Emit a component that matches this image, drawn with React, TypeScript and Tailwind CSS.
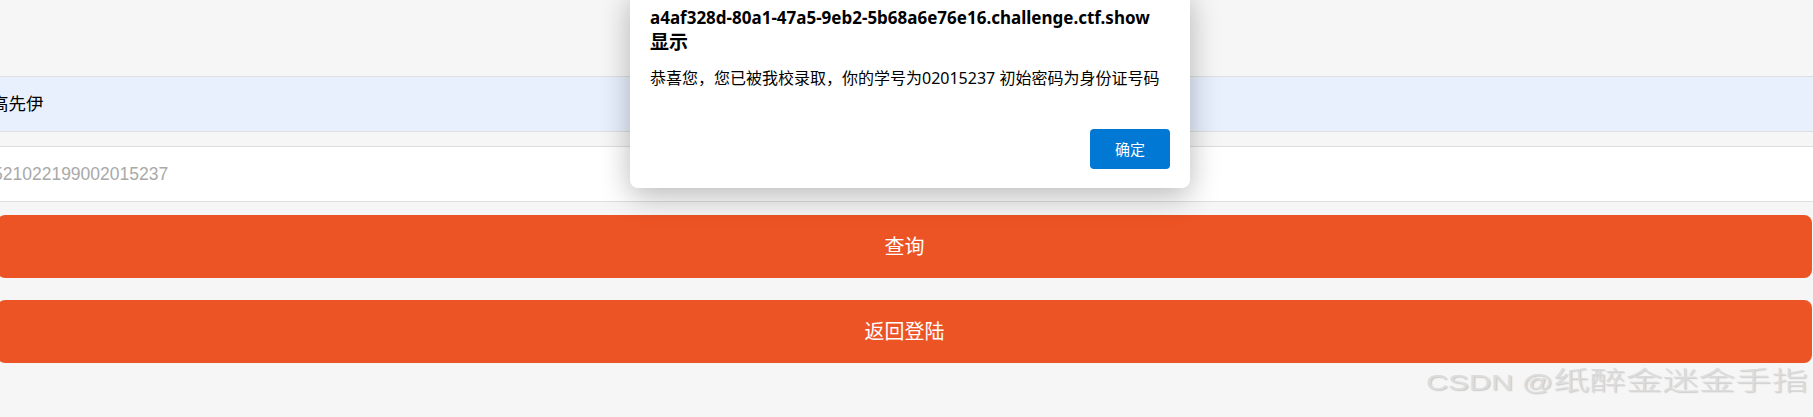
export default function App() {
  return (
    <div className="relative h-[417px] w-full overflow-hidden bg-[#f6f6f6] font-['Liberation_Sans','Noto_Sans_CJK_SC',sans-serif]">
      {/* form */}
      <div className="pt-[76px]">
        <div className="flex h-[56px] items-center border-y border-[#dedede] bg-[#e8f0fe]">
          <span className="-ml-[9px] text-[17.5px] text-black">高先伊</span>
        </div>
        <div className="mt-[14px] flex h-[56px] items-center border-y border-[#dedede] bg-white">
          <span className="-ml-[7px] text-[17.5px] text-[#a9a9a9]">521022199002015237</span>
        </div>
        <div className="-ml-[3px] mr-[1px] mt-[13px] flex h-[63px] items-center justify-center rounded-[8px] bg-[#ec5325] text-[20px] text-white">
          查询
        </div>
        <div className="-ml-[3px] mr-[1px] mt-[22px] flex h-[63px] items-center justify-center rounded-[8px] bg-[#ec5325] text-[20px] text-white">
          返回登陆
        </div>
      </div>

      {/* alert dialog */}
      <div className="absolute left-[630px] top-[-10px] flex h-[198px] w-[560px] flex-col rounded-lg bg-white px-5 pb-[19px] pt-[15px] font-['Noto_Sans','Noto_Sans_CJK_SC',sans-serif] text-black shadow-[0_8px_30px_rgba(0,0,0,0.28)]">
        <div className="font-bold leading-[25px]">
          <div className="text-[17px]">a4af328d-80a1-47a5-9eb2-5b68a6e76e16.challenge.ctf.show</div>
          <div className="text-[19px]">显示</div>
        </div>
        <p className="mt-[11px] text-[16px] leading-[24px]">
          恭喜您，您已被我校录取，你的学号为02015237 初始密码为身份证号码
        </p>
        <div className="mt-auto flex justify-end">
          <button className="h-[40px] w-[80px] rounded-[4px] bg-[#0078d4] text-[15px] text-white">确定</button>
        </div>
      </div>

      {/* watermark */}
      <div className="absolute right-[5px] top-[366px] origin-right scale-x-[1.4] whitespace-nowrap leading-none text-[#dcdcdc] [text-shadow:1px_1px_1px_rgba(0,0,0,0.18)]">
        <span className="font-['Liberation_Sans',sans-serif] text-[22px]">CSDN @</span>
        <span className="font-['Noto_Sans_CJK_SC',sans-serif] text-[26px] font-light">纸醉金迷金手指</span>
      </div>
    </div>
  );
}
